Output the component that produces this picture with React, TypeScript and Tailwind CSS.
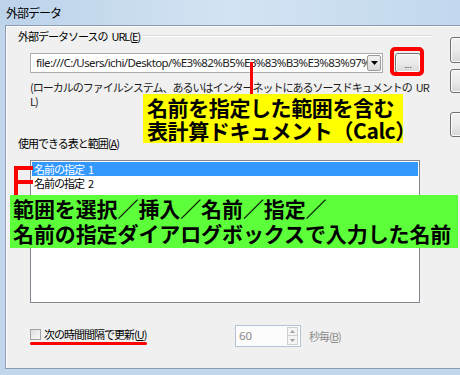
import React from "react";

const jp = "font-['Meiryo_UI','Noto_Sans_CJK_JP',sans-serif]";

function WinButton({ className = "", children }: { className?: string; children?: React.ReactNode }) {
  return (
    <div
      className={
        "rounded-[3px] border border-[#707070] bg-gradient-to-b from-[#f2f2f2] via-[#ebebeb] to-[#d6d6d6] shadow-[inset_0_0_0_1px_#fcfcfc] flex items-center justify-center " +
        className
      }
    >
      {children}
    </div>
  );
}

export default function App() {
  return (
    <div className={`relative w-[460px] h-[375px] overflow-hidden bg-[#c2d7ec] flex flex-col ${jp}`}>
      {/* title bar */}
      <div className="h-[25px] shrink-0 bg-gradient-to-r from-[#bcd3ea] via-[#d3e3f3] to-[#c2d8ee] flex items-center pl-[6px] text-[12px] tracking-[-1px] text-black">
        外部データ
      </div>

      {/* dialog body */}
      <div className="ml-[5px] h-[344px] w-[560px] shrink-0 border border-[#8c9cb0] bg-[#f0f0f0] shadow-[inset_1px_1px_0_#ffffff] flex">
        {/* main column */}
        <div className="w-[444px] shrink-0 flex flex-col pl-[12px] pt-[2px] text-[11px] tracking-[-1px] text-black">
          {/* group header */}
          <div className="h-[16px] flex items-center pr-[18px]">
            <span className="whitespace-nowrap">
              外部データソースの<span className="ml-[4px]">URL(<span className="underline">E</span>)</span>
            </span>
            <div className="flex-1 ml-[3px] h-[2px] border-t border-[#d5dfe5] border-b-white border-b" />
          </div>

          {/* combo row */}
          <div className="mt-[9px] ml-[12px] flex items-center h-[20px]">
            <div className="w-[353px] h-[20px] border border-[#abadb3] bg-white flex items-center">
              <div className="flex-1 overflow-hidden whitespace-nowrap pl-[5px] font-['Noto_Sans',sans-serif] text-[11.5px] tracking-[-0.6px] text-[#222]">
                file:///C:/Users/ichi/Desktop/%E3%82%B5%E3%83%B3%E3%83%97%E3%83%AB
              </div>
              <div className="w-[14px] h-[16px] mr-[1px] border border-[#9a9a9a] rounded-[2px] bg-gradient-to-b from-[#f3f3f3] to-[#d9d9d9] flex items-center justify-center">
                <svg width="7" height="4" viewBox="0 0 7 4">
                  <path d="M0 0 L7 0 L3.5 4 Z" fill="#000" />
                </svg>
              </div>
            </div>
            <WinButton className="ml-[12px] w-[26px] h-[20px]">
              <span className="font-['Noto_Sans',sans-serif] text-[9px] tracking-[0px] text-[#333] leading-none mt-[2px]">...</span>
            </WinButton>
          </div>

          {/* description */}
          <div className="mt-[7px] ml-[12px] leading-[14px] whitespace-nowrap text-[#1a1a1a]">
            <div>
              (ローカルのファイルシステム、あるいはインターネットにあるソースドキュメントの<span className="ml-[4px]">UR</span>
            </div>
            <div>L)</div>
          </div>

          {/* available tables */}
          <div className="mt-[27px] h-[16px] flex items-center whitespace-nowrap">
            使用できる表と範囲(<span className="underline">A</span>)
          </div>

          {/* listbox */}
          <div className="mt-[9px] ml-[12px] w-[390px] h-[143px] border border-[#828790] bg-white flex flex-col pt-[1px] px-[1px]">
            <div className="h-[14px] bg-[#3399ff] text-white flex items-center pl-[2px] whitespace-nowrap">
              名前の指定<span className="ml-[4px]">1</span>
            </div>
            <div className="h-[15px] flex items-center pl-[2px] whitespace-nowrap">
              名前の指定<span className="ml-[4px]">2</span>
            </div>
          </div>

          {/* update row */}
          <div className="mt-[22px] ml-[12px] h-[22px] flex items-center">
            <div className="w-[205px] flex items-center mt-[-3px]">
              <div className="w-[11px] h-[11px] border border-[#a3a3a3] bg-gradient-to-br from-[#e0e0e0] to-[#f7f7f7]" />
              <span className="ml-[3px] whitespace-nowrap">
                次の時間間隔で更新(<span className="underline">U</span>)
              </span>
            </div>
            <div className="w-[66px] h-[22px] border border-[#b4c3d8] bg-[#fcfcfc] flex items-center">
              <span className="flex-1 pl-[3px] font-['Noto_Sans',sans-serif] text-[11.5px] tracking-[0px] text-[#8a8a8a]">60</span>
              <div className="w-[11px] h-[18px] mr-[2px] flex flex-col">
                <div className="h-[9px] border border-[#cfcfcf] bg-[#f4f4f4] flex items-center justify-center">
                  <svg width="5" height="3" viewBox="0 0 5 3"><path d="M0 3 L5 3 L2.5 0 Z" fill="#a0a0a0" /></svg>
                </div>
                <div className="h-[9px] border border-t-0 border-[#cfcfcf] bg-[#f4f4f4] flex items-center justify-center">
                  <svg width="5" height="3" viewBox="0 0 5 3"><path d="M0 0 L5 0 L2.5 3 Z" fill="#a0a0a0" /></svg>
                </div>
              </div>
            </div>
            <span className="ml-[8px] whitespace-nowrap text-[#8d8d8d]">
              秒毎(<span className="underline">B</span>)
            </span>
          </div>
        </div>

        {/* right buttons column */}
        <div className="flex flex-col pt-[11px]">
          <WinButton className="w-[80px] h-[26px] border-[#3c7fb1] shadow-[inset_0_0_0_1px_#bfe7fb]" />
          <WinButton className="mt-[6px] w-[80px] h-[24px]" />
          <WinButton className="mt-[19px] w-[80px] h-[25px]" />
        </div>
      </div>

      {/* annotations */}
      <div className="absolute left-[390px] top-[47px] w-[34px] h-[29px] border-4 border-[#ff0000] rounded-[5px]" />
      <div className="absolute left-[250px] top-[62px] w-[3px] h-[33px] bg-[#ff0000]" />
      <div className="absolute left-[143px] top-[94px] w-[260px] h-[49px] bg-[#ffff00] pl-[4px] pt-[2px] font-['Noto_Sans_CJK_JP',sans-serif] font-bold text-[21px] leading-[23px] tracking-[-0.4px] text-black whitespace-nowrap">
        <div>名前を指定した範囲を含む</div>
        <div>表計算ドキュメント（Calc）</div>
      </div>

      <div className="absolute left-[14px] top-[166px] w-[4px] h-[30px] bg-[#ff0000]" />
      <div className="absolute left-[14px] top-[166px] w-[19px] h-[4px] bg-[#ff0000]" />
      <div className="absolute left-[14px] top-[180px] w-[19px] h-[4px] bg-[#ff0000]" />

      <div className="absolute left-[10px] top-[195px] w-[448px] h-[53px] bg-[#5cff3a] pl-[3px] pt-[1px] font-['Noto_Sans_CJK_JP',sans-serif] font-bold text-[21px] leading-[25px] tracking-[-0.1px] text-black whitespace-nowrap">
        <div>範囲を選択／挿入／名前／指定／</div>
        <div>名前の指定ダイアログボックスで入力した名前</div>
      </div>

      <div className="absolute left-[30px] top-[342px] w-[117px] h-[3px] rounded-full bg-[#ff0000]" />
    </div>
  );
}
